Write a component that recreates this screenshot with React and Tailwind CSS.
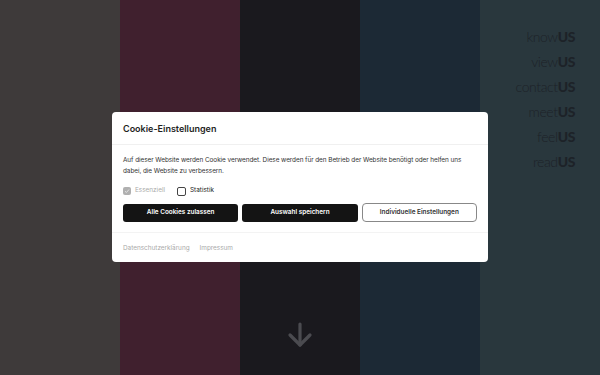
import React from "react";

export default function App() {
  const links = ["know", "view", "contact", "meet", "feel", "read"];
  return (
    <div className="relative w-[600px] h-[375px] overflow-hidden flex" style={{ fontFamily: "Inter, 'Noto Sans', sans-serif" }}>
      <div className="w-[120px] h-full bg-[#3e3a3a]" />
      <div className="w-[120px] h-full bg-[#40202e]" />
      <div className="w-[120px] h-full bg-[#1a191e] flex flex-col items-center justify-end pb-[26px]">
        <svg width="26" height="28" viewBox="0 0 26 28" fill="none" stroke="#4b4b50" strokeWidth="3.2" strokeLinecap="round" strokeLinejoin="round">
          <path d="M13 3 V24" />
          <path d="M3 14 L13 24 L23 14" />
        </svg>
      </div>
      <div className="w-[120px] h-full bg-[#1c2935]" />
      <div className="w-[120px] h-full bg-[#29373d] flex flex-col items-end pr-[25px] pt-[27px] gap-[5px]">
        {links.map((l) => (
          <div key={l} className="h-[20px] text-[14px] leading-[20px] text-[#1d2228] tracking-[-0.4px]" style={{ fontFamily: "Lato, sans-serif" }}>
            <span className="font-light">{l}</span>
            <span className="font-black">US</span>
          </div>
        ))}
      </div>

      <div className="absolute left-[112px] top-[112px] w-[376px] bg-white rounded-[4px] text-[#222]">
        <div className="px-[11px] pt-[10px] pb-[9px] border-b border-[#f0f0f0]">
          <div className="text-[9px] font-semibold leading-[13px] text-[#1e1e1e]">Cookie-Einstellungen</div>
        </div>
        <div className="px-[11px] pt-[10px] pb-[10px] border-b border-[#f3f3f3]">
          <p className="text-[6.4px] leading-[11px] text-[#333] tracking-[-0.05px]">
            Auf dieser Website werden Cookie verwendet. Diese werden für den Betrieb der Website benötigt oder helfen uns dabei, die Website zu verbessern.
          </p>
          <div className="flex items-center mt-[9px] h-[10px]">
            <div className="w-[8px] h-[8px] rounded-[2px] bg-[#b0b0b0] flex items-center justify-center">
              <svg width="6" height="6" viewBox="0 0 6 6" fill="none" stroke="#e8e8e8" strokeWidth="0.9"><path d="M1 3.2 L2.4 4.5 L5 1.5" /></svg>
            </div>
            <span className="text-[6.4px] text-[#aaa] ml-[4px]">Essenziell</span>
            <div className="w-[9px] h-[9px] rounded-[2px] border border-[#444] ml-[12px]" />
            <span className="text-[6.4px] text-[#222] ml-[4px]">Statistik</span>
          </div>
          <div className="grid grid-cols-3 gap-[4px] mt-[8px]">
            <button className="h-[18px] rounded-[3px] bg-[#141414] text-white text-[6.4px] font-semibold">Alle Cookies zulassen</button>
            <button className="h-[18px] rounded-[3px] bg-[#141414] text-white text-[6.4px] font-semibold">Auswahl speichern</button>
            <button className="h-[19px] -mt-[1px] rounded-[4px] bg-white border border-[#888] text-[#333] text-[6.4px] font-semibold">Individuelle Einstellungen</button>
          </div>
        </div>
        <div className="px-[11px] pt-[10px] pb-[8px] flex gap-[10px] text-[6.4px] text-[#aaa] leading-[11px]">
          <span>Datenschutzerklärung</span>
          <span>Impressum</span>
        </div>
      </div>
    </div>
  );
}
